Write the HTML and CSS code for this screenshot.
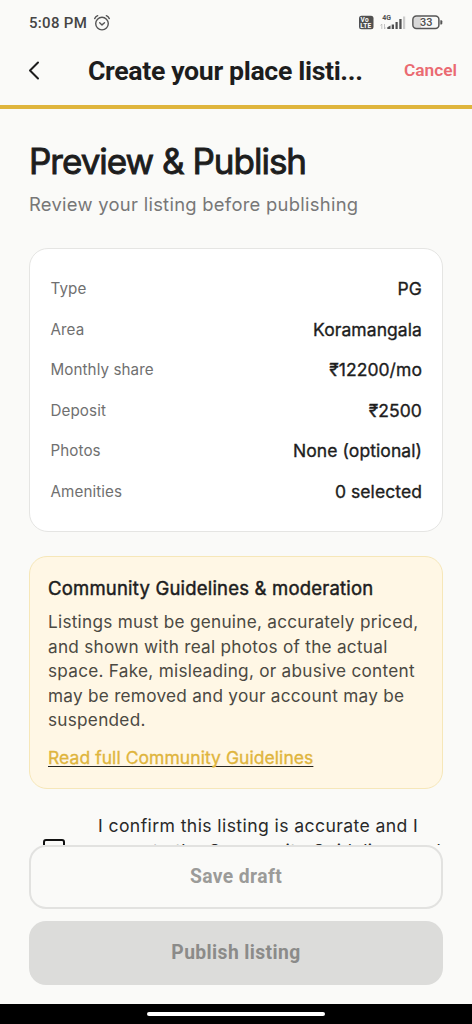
FILE: index.html
```html
<!DOCTYPE html>
<html lang="en">
<head>
<meta charset="utf-8">
<title>Create your place listing</title>
<link rel="stylesheet" href="styles.css">
</head>
<body>
<div class="screen">
  <div class="status">
    <span class="clock">5:08 PM</span>
    <svg class="alarm" width="18" height="18" viewBox="0 0 18 18" fill="none" stroke="#555" stroke-width="1.4" stroke-linecap="round" stroke-linejoin="round"><circle cx="9" cy="9.6" r="6.3"/><path d="M1.7 4.6Q2.6 2.6 4.7 1.7M13.3 1.7Q15.4 2.6 16.3 4.6M6.7 8.8L9 10.9L11.5 8.8"/></svg>
    <svg class="indicators" width="86" height="20" viewBox="0 0 86 20">
      <rect x="1" y="2.8" width="14.5" height="13.5" rx="2.5" fill="#505050"/>
      <text x="2.6" y="9" class="volte">Vo</text>
      <text x="2.3" y="15.2" class="volte">LTE</text>
      <text x="24.3" y="7.2" class="net">4G</text>
      <path d="M23.8 16V11L22.5 12.5M26.5 11V16L27.7 14.5" fill="none" stroke="#b5b5b5" stroke-width=".8"/>
      <path d="M29.3 16V14.2L32.5 12.5V16ZM33.7 16V11.5H36V16ZM37.5 16V9H39.7V16ZM41.3 16V6H43.6V16Z" fill="#505050"/>
      <path d="M45 16V3.5H47.2V16Z" fill="#ccc"/>
      <rect x="56" y="4.2" width="7" height="10.5" fill="#d8d8d8"/>
      <rect x="54.9" y="3.1" width="26" height="12.5" rx="3.5" fill="none" stroke="#555" stroke-width="1.5"/>
      <path d="M82.3 7.2H83.2Q84.3 7.2 84.3 8.2V10.4Q84.3 11.4 83.2 11.4H82.3Z" fill="#555"/>
      <text x="68.2" y="13.2" text-anchor="middle" class="charge">33</text>
    </svg>
  </div>
  <header class="appbar">
    <svg class="back" width="12" height="19" viewBox="0 0 12 19" fill="none" stroke="#1d1d1d" stroke-width="2" stroke-linecap="round" stroke-linejoin="round"><path d="M10 1.5L2 9.5L10 17.5"/></svg>
    <h1 class="bar-title">Create your place listi...</h1>
    <span class="cancel">Cancel</span>
  </header>
  <main class="content">
    <h2 class="title">Preview &amp; Publish</h2>
    <p class="subtitle">Review your listing before publishing</p>
    <section class="summary">
      <div class="row"><span class="label">Type</span><span class="value">PG</span></div>
      <div class="row"><span class="label">Area</span><span class="value">Koramangala</span></div>
      <div class="row"><span class="label">Monthly share</span><span class="value">₹12200/mo</span></div>
      <div class="row"><span class="label">Deposit</span><span class="value">₹2500</span></div>
      <div class="row"><span class="label">Photos</span><span class="value">None (optional)</span></div>
      <div class="row"><span class="label">Amenities</span><span class="value">0 selected</span></div>
    </section>
    <section class="notice">
      <h3 class="notice-title">Community Guidelines &amp; moderation</h3>
      <p class="notice-text">Listings must be genuine, accurately priced,<br>and shown with real photos of the actual<br>space. Fake, misleading, or abusive content<br>may be removed and your account may be<br>suspended.</p>
      <a class="notice-link">Read full Community Guidelines</a>
    </section>
    <div class="confirm">
      <span class="checkbox"></span>
      <p class="confirm-text">I confirm this listing is accurate and I<br>agree to the Community Guidelines and</p>
    </div>
  </main>
  <footer class="actions">
    <div class="button draft">Save draft</div>
    <div class="button publish">Publish listing</div>
  </footer>
  <div class="navbar"><span class="handle"></span></div>
</div>
</body>
</html>
```
FILE: styles.css
```css
* { box-sizing: border-box; margin: 0; padding: 0; }
body { background: #fafaf8; font-family: Inter, "Noto Sans", sans-serif; color: #1d1d1d; }
.screen { width: 472px; height: 1024px; display: flex; flex-direction: column; overflow: hidden; }

.status { height: 44px; flex: none; display: flex; align-items: center; padding: 1px 28px 0 29px; }
.clock { font: 500 15px/20px Roboto, sans-serif; color: #454545; letter-spacing: .3px; }
.alarm { margin-left: 6px; }
.indicators { margin-left: auto; }
.volte { font: 700 6.5px Roboto, sans-serif; fill: #fff; letter-spacing: .2px; }
.net { font: 700 7px Roboto, sans-serif; fill: #505050; }
.charge { font: 500 11px Roboto, sans-serif; fill: #505050; }

.appbar { height: 65px; flex: none; display: flex; align-items: center; padding: 0 15px 8px 28px; border-bottom: 4px solid #dfb53d; }
.back { flex: none; }
.bar-title { margin-left: 48px; padding-top: 1px; font: 700 26.7px/32px Roboto, sans-serif; letter-spacing: -.36px; white-space: nowrap; }
.cancel { margin-left: auto; padding-bottom: 2px; font: 600 17.3px/22px Roboto, sans-serif; color: #ea6a72; }

.content { height: 736px; flex: none; overflow: hidden; padding: 30px 29px 0; display: flex; flex-direction: column; }
.title { font-size: 35px; line-height: 44px; font-weight: 400; letter-spacing: -1px; -webkit-text-stroke: .9px; white-space: nowrap; }
.subtitle { margin-top: 9px; font-size: 18.4px; line-height: 24px; letter-spacing: .28px; color: #777; white-space: nowrap; }
.summary { margin-top: 32px; height: 284px; flex: none; padding: 19.6px 20px 0 20.5px; border: 1.5px solid #e5e5e3; border-radius: 19px; background: #fff; }
.row { height: 40.5px; display: flex; align-items: center; justify-content: space-between; }
.label { font-size: 15.2px; letter-spacing: .08px; color: #707070; }
.value { font-size: 17.5px; letter-spacing: .08px; -webkit-text-stroke: .35px; }

.notice { margin-top: 24px; height: 233px; flex: none; padding: 19.4px 18px 0; border: 1.5px solid #f6e7b9; border-radius: 18px; background: #fff7e5; white-space: nowrap; }
.notice-title { font-size: 18.5px; line-height: 24px; font-weight: 400; letter-spacing: .2px; -webkit-text-stroke: .45px; }
.notice-text { margin-top: 10px; font-size: 17.2px; line-height: 24.5px; letter-spacing: .26px; color: #4b4942; }
.notice-link { display: inline-block; margin-top: 15.6px; font-size: 17.5px; line-height: 19px; letter-spacing: .06px; color: #dfb53d; -webkit-text-stroke: .35px #dfb53d; text-decoration: underline #26251f 1.4px; text-underline-offset: 1.5px; text-decoration-skip-ink: none; }

.confirm { display: flex; margin-top: 25px; padding-left: 14px; }
.checkbox { width: 22px; height: 22px; margin-top: 25px; flex: none; border: 2.4px solid #111; border-radius: 3px; }
.confirm-text { margin-left: 33px; font-size: 17.6px; line-height: 24.5px; letter-spacing: .4px; color: #292929; white-space: nowrap; }

.actions { height: 159px; flex: none; padding: 0 29px; display: flex; flex-direction: column; gap: 12px; }
.button { height: 64px; display: flex; align-items: center; justify-content: center; border-radius: 17px; font: 700 19.3px/24px Roboto, sans-serif; letter-spacing: .4px; }
.draft { border: 2px solid #e2e2e0; color: #9b9b99; }
.publish { background: #dcdcda; color: #8b8b89; }
.navbar { height: 20px; flex: none; display: flex; justify-content: center; align-items: center; background: #000; }
.handle { width: 178px; height: 4px; border-radius: 2px; background: #fff; }
```
